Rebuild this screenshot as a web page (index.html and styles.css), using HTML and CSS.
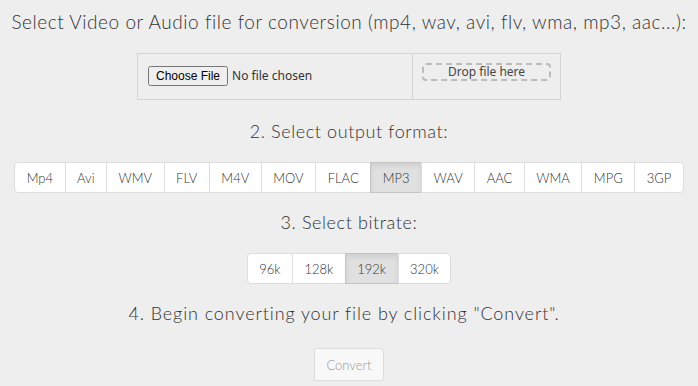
FILE: index.html
```html
<!DOCTYPE html>
<html lang="en">

<head>
    <meta charset="UTF-8">
    <meta name="viewport" content="width=device-width, initial-scale=1.0">
    <title>Online Converter</title>

    <link rel="stylesheet" href="styles.css">

</head>

<body>
    <div class="converter">

        <h2 class="step step-first">Select Video or Audio file for conversion (mp4, wav, avi, flv, wma, mp3, aac...):</h2>

        <div class="upload">
            <div class="upload-pick">
                <input type="file" id="file-input">
            </div>
            <div class="upload-drop">
                <div class="drop-zone">Drop file here</div>
            </div>
        </div>

        <h2 class="step">2. Select output format:</h2>

        <div class="btn-group">
            <button class="btn">Mp4</button>
            <button class="btn">Avi</button>
            <button class="btn">WMV</button>
            <button class="btn">FLV</button>
            <button class="btn">M4V</button>
            <button class="btn">MOV</button>
            <button class="btn">FLAC</button>
            <button class="btn active">MP3</button>
            <button class="btn">WAV</button>
            <button class="btn">AAC</button>
            <button class="btn">WMA</button>
            <button class="btn">MPG</button>
            <button class="btn">3GP</button>
        </div>

        <h2 class="step">3. Select bitrate:</h2>

        <div class="btn-group">
            <button class="btn">96k</button>
            <button class="btn">128k</button>
            <button class="btn active">192k</button>
            <button class="btn">320k</button>
        </div>

        <h2 class="step step-last">4. Begin converting your file by clicking "Convert".</h2>

        <div>
            <button class="btn btn-convert" disabled>Convert</button>
        </div>

    </div>
</body>

</html>
```

FILE: styles.css
```css
* {
    box-sizing: border-box;
}

body {
    margin: 0;
    background-color: #eeeeee;
    font-family: Lato, "Open Sans", sans-serif;
    color: #444;
}

.converter {
    text-align: center;
    padding-top: 11px;
}

.step {
    font-weight: 300;
    font-size: 18px;
    line-height: 22px;
    margin: 0;
    color: #333;
    letter-spacing: 0.6px;
}

.step-first {
    font-size: 19px;
    letter-spacing: 0.55px;
    margin-bottom: 20px;
}

.step-last {
    letter-spacing: 0.9px;
    padding-right: 10px;
}

.upload {
    display: inline-flex;
    border: 1px solid #d4d4d4;
    height: 47px;
    margin-bottom: 20px;
}

.upload-pick {
    width: 275px;
    padding: 10px;
    text-align: left;
    border-right: 1px solid #d4d4d4;
}

#file-input {
    font-family: "Noto Sans", sans-serif;
    font-size: 12px;
    color: #333;
}

.upload-drop {
    width: 147px;
    padding: 9px 9px;
}

.drop-zone {
    border: 2px dashed #bbbbbb;
    border-radius: 4px;
    height: 18px;
    line-height: 14px;
    font-family: "Noto Sans", sans-serif;
    font-size: 12px;
    color: #444;
}

.btn-group {
    display: inline-flex;
    margin: 20px 0 18px;
}

.btn {
    font-family: Lato, "Open Sans", sans-serif;
    font-weight: 300;
    font-size: 13px;
    color: #333;
    background-color: #fff;
    border: 1px solid #dddddd;
    padding: 0 11.5px;
    height: 31px;
    margin-left: -1px;
}

.btn:first-child {
    margin-left: 0;
    border-radius: 4px 0 0 4px;
}

.btn:last-child {
    border-radius: 0 4px 4px 0;
}

.btn.active {
    background-color: #e0e0e0;
    border-color: #c4c4c4;
    box-shadow: inset 0 3px 5px rgba(0, 0, 0, 0.08);
}

.btn-convert {
    margin-top: 24px;
    height: 33px;
    border-radius: 4px;
    color: #999;
    background-color: #f8f8f8;
}
```
